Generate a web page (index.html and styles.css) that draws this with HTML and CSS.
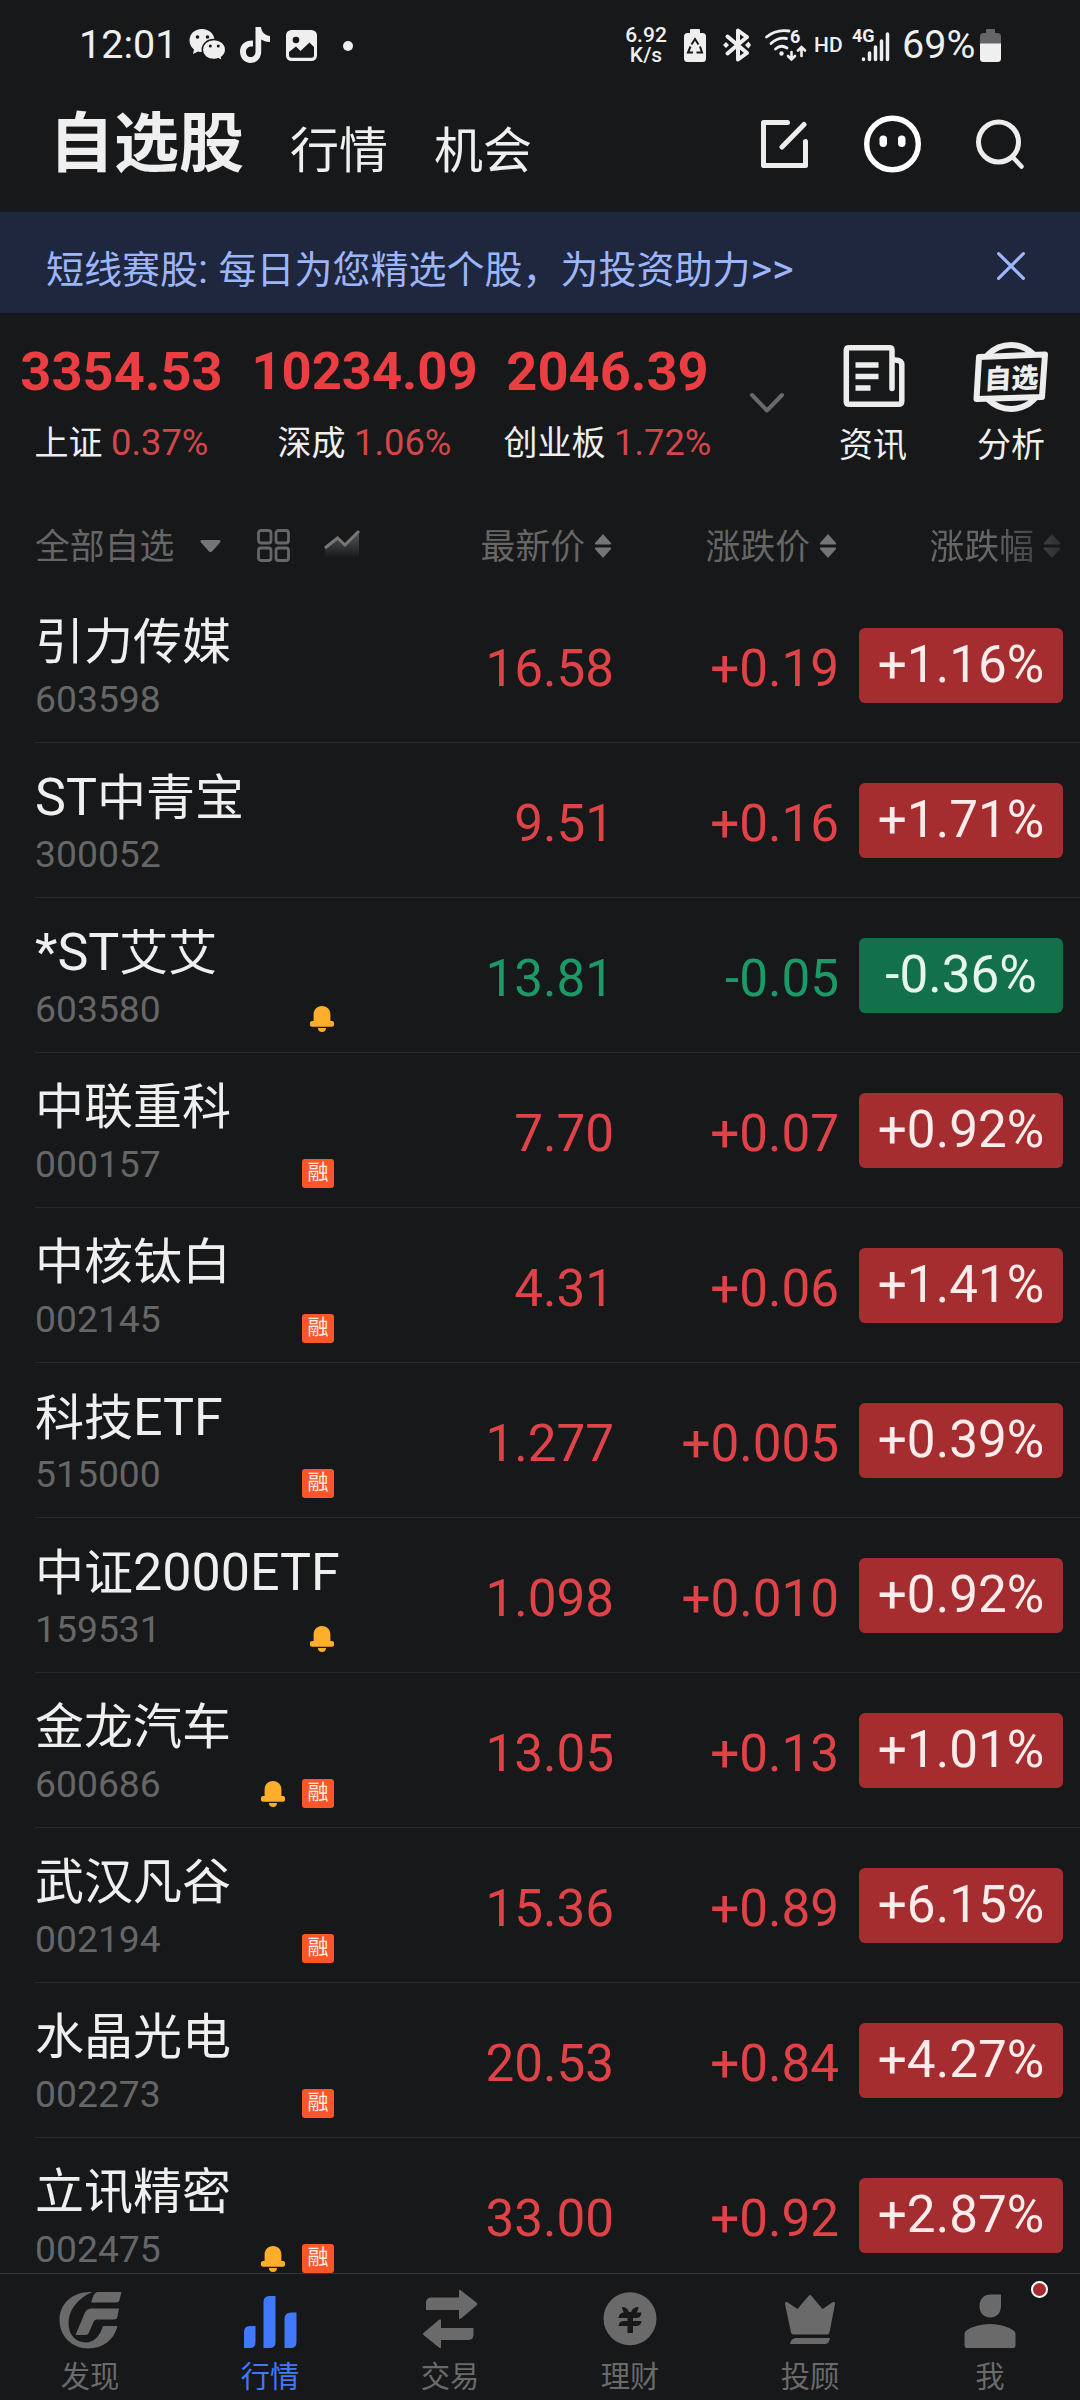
FILE: index.html
```html
<!DOCTYPE html>
<html lang="zh-CN">

<head>
    <meta charset="UTF-8">
    <meta name="viewport" content="width=device-width, initial-scale=1.0">
    <title>自选股</title>
    <link rel="stylesheet" href="styles.css">
</head>

<body>
    <!-- 公用图标 -->
    <svg class="sprite" width="0" height="0">
        <symbol id="bell" viewBox="0 0 24 26">
            <path d="M12 0C6.800 0 3.600 3.800 3.600 8.500V15H2.600A2.900 2.900 0 0 0 2.600 20.800H21.400A2.900 2.900 0 0 0 21.400 15H20.400V8.500C20.400 3.800 17.200 0 12 0Z" />
            <path d="M8 22H16C16 24.500 14.500 26 12 26S8 24.500 8 22Z" />
        </symbol>
        <symbol id="sort" viewBox="0 0 18 24">
            <path d="M9 0L17 9Q17.500 10.500 16.500 10.500H1.500Q.500 10.500 1 9Z" />
            <path d="M9 24L17 15Q17.500 13.500 16.500 13.500H1.500Q.500 13.500 1 15Z" />
        </symbol>
    </svg>

    <div class="app">
        <!-- 状态栏 -->
        <div class="status">
            <span class="time">12:01</span>
            <svg class="wechat" width="37" height="34" viewBox="0 0 37 34">
                <path fill="#efefef" d="M13 1C5.500 1 .500 6 .500 12.500C.500 16.500 2.500 19.500 5 21.500L4 26L9 23.500Q11 24 13 24C20 24 25.500 19 25.500 12.500S20 1 13 1Z" />
                <path fill="#efefef" stroke="#17181a" stroke-width="1.500" d="M25 11.500C18 11.500 13.300 16 13.300 21.700S18 31.500 25 31.500Q27.500 31.500 29.500 30.800L33.500 33L32.500 29.300C35 27.500 36.700 24.800 36.700 21.700C36.700 16 31.500 11.500 25 11.500Z" />
                <g fill="#17181a">
                    <circle cx="8.500" cy="9" r="1.800" />
                    <circle cx="18.500" cy="9" r="1.800" />
                    <circle cx="21.300" cy="18" r="1.500" />
                    <circle cx="29.300" cy="18" r="1.500" />
                </g>
            </svg>
            <svg class="tiktok" width="30" height="36" viewBox="0 0 30 36">
                <path fill="#efefef" d="M15.500 0H21C21.500 5 25 8.500 30 9V15Q25 15 21.200 12.500V24.500C21.200 31.500 16.500 36 10.500 36S0 31 0 24.500C0 17.500 5.500 13 13 13.500V19.500C9 19 6 21 6 24.700C6 28 8 30 10.700 30S15.500 28 15.500 24.500Z" />
            </svg>
            <svg class="photo" width="31" height="31" viewBox="0 0 31 31">
                <rect width="31" height="31" rx="5.500" fill="#efefef" />
                <circle cx="10" cy="10" r="3.300" fill="#17181a" />
                <path fill="#17181a" d="M3 22L10 16.500L14.500 21L23.500 12.500L28 17V25.500Q28 27.800 25.500 27.800H5.500Q3 27.800 3 25.500Z" />
            </svg>
            <i class="more"></i>
            <span class="speed">6.92<br>K/s</span>
            <svg class="eco" width="22" height="33" viewBox="0 0 22 33">
                <path fill="#efefef" d="M7 0H15Q16 0 16 1V4H18.500Q22 4 22 7.500V29.500Q22 33 18.500 33H3.500Q0 33 0 29.500V7.500Q0 4 3.500 4H6V1Q6 0 7 0Z" />
                <path fill="none" stroke="#17181a" stroke-width="2" d="M7.500 15.500L11 10L14.500 15.500M16 17.500L18 23.500H12.500M9 23.500H4L6.500 17.500" />
            </svg>
            <svg class="bt" width="28" height="34" viewBox="0 0 28 34">
                <path fill="none" stroke="#efefef" stroke-width="4" stroke-linejoin="round" stroke-linecap="round" d="M4.500 8.500L24 25L15 31.500V2.500L24 9L4.500 25.500" />
                <path fill="#efefef" d="M0 17L3 14L6 17L3 20ZM22 17L25.500 13.500L28 17L25.500 20.500Z" />
            </svg>
            <svg class="wifi" width="41" height="34" viewBox="0 0 41 34">
                <g fill="none" stroke="#efefef" stroke-width="2.800" stroke-linecap="round">
                    <path d="M1.500 9Q11 1 24 3M6 15.500Q13 9 21.500 10.500M10.500 21Q16 16 22 20" />
                    <path stroke-width="2.600" d="M26.500 24V31M23 28L26.500 31.500L30 28M36.500 28V20M33 22.500L36.500 19L40 22.500" />
                </g>
                <circle cx="16.500" cy="25.500" r="2.200" fill="#efefef" />
                <text x="25" y="15" class="tiny">6</text>
            </svg>
            <span class="hd">HD</span>
            <svg class="signal" width="37" height="34" viewBox="0 0 37 34">
                <text x="-1" y="13.500" class="tiny">4G</text>
                <path fill="none" stroke="#efefef" stroke-width="3.500" stroke-linecap="round" d="M10.500 31V31.500M16.500 25V31.500M22.500 19V31.500M28.500 13V31.500M34.500 6V31.500" />
            </svg>
            <span class="percent">69%</span>
            <svg class="battery" width="21" height="33" viewBox="0 0 21 33">
                <path fill="#666669" d="M7 0H14Q15 0 15 1V4H17.500Q21 4 21 7.500V15H0V7.500Q0 4 3.500 4H6V1Q6 0 7 0Z" />
                <path fill="#efefef" d="M0 14.500H21V29.500Q21 33 17.500 33H3.500Q0 33 0 29.500Z" />
            </svg>
        </div>

        <!-- 头部 -->
        <div class="header">
            <span class="current">自选股</span>
            <span class="tab">行情</span>
            <span class="tab">机会</span>
            <div class="tools">
                <svg width="47" height="48" viewBox="0 0 47 48">
                    <path fill="none" stroke="#ededed" stroke-width="5" stroke-linecap="round" stroke-linejoin="round" d="M26.500 2.500H2.500V45.500H44.500V21.500M43 4.500L21 27" />
                </svg>
                <svg width="57" height="58" viewBox="0 0 57 58">
                    <circle cx="28.500" cy="29" r="25.800" fill="none" stroke="#fff" stroke-width="5.400" />
                    <rect x="15.500" y="20.500" width="7.500" height="11.500" rx="3.700" fill="#fff" />
                    <rect x="34" y="20.500" width="7.500" height="11.500" rx="3.700" fill="#fff" />
                </svg>
                <svg width="48" height="50" viewBox="0 0 48 50">
                    <circle cx="22.500" cy="23" r="20" fill="none" stroke="#ededed" stroke-width="5" />
                    <path stroke="#ededed" stroke-width="4.500" stroke-linecap="round" d="M38 39.500L45.500 47.500" />
                </svg>
            </div>
        </div>

        <!-- 广告条 -->
        <div class="notice">
            <p>短线赛股<span>: </span>每日为您精选个股，为投资助力<span>&gt;&gt;</span></p>
            <svg width="28" height="28" viewBox="0 0 28 28">
                <path fill="none" stroke="#9db5fa" stroke-width="3.200" stroke-linecap="round" d="M1.600 1.600L26.400 26.400M26.400 1.600L1.600 26.400" />
            </svg>
        </div>

        <!-- 大盘指数 -->
        <div class="index">
            <div class="index-item">
                <b>3354.53</b>
                <p>上证 <span>0.37%</span></p>
            </div>
            <div class="index-item">
                <b class="long">10234.09</b>
                <p>深成 <span>1.06%</span></p>
            </div>
            <div class="index-item">
                <b>2046.39</b>
                <p>创业板 <span>1.72%</span></p>
            </div>
            <svg class="down" width="34" height="20" viewBox="0 0 34 20">
                <path fill="none" stroke="#6a6a6a" stroke-width="4" stroke-linecap="round" stroke-linejoin="round" d="M2 2L17 17.500L32 2" />
            </svg>
            <div class="entry">
                <svg width="76" height="72" viewBox="0 0 76 72">
                    <g fill="none" stroke="#ededed" stroke-linejoin="round" stroke-linecap="round" stroke-width="5.500">
                        <path d="M57 48.500V10Q57 7.800 54.500 7.800H14Q11.300 7.800 11.300 10.500V61.500Q11.300 64.300 14 64.300H63.500Q66.800 64.300 66.800 61V25Q66.800 20 60 20" />
                    </g>
                    <path stroke="#ededed" stroke-width="5.500" d="M20.500 25H43.500M20.500 36.500H43.500M20.500 48H35.500" />
                </svg>
                <p>资讯</p>
            </div>
            <div class="entry">
                <svg width="76" height="72" viewBox="0 0 76 72">
                    <circle cx="38" cy="37" r="32" fill="none" stroke="#ededed" stroke-width="6" />
                    <path fill="#17181a" stroke="#ededed" stroke-width="6" stroke-linejoin="round" d="M6 17L72 14.500L69 57L3.500 59Z" />
                    <text class="stamp" x="0" y="0" transform="translate(11 49) rotate(-2) skewX(-5)">自选</text>
                </svg>
                <p>分析</p>
            </div>
        </div>

        <!-- 表头 -->
        <div class="row thead">
            <div class="filter">
                <span>全部自选</span>
                <svg class="arrow" width="21" height="13" viewBox="0 0 21 13">
                    <path fill="#757575" d="M2 0H19Q21.500 0 20 2.500L12 11.500Q10.500 13 9 11.500L1 2.500Q-.500 0 2 0Z" />
                </svg>
                <svg class="grid" width="33" height="33" viewBox="0 0 33 33">
                    <g fill="none" stroke="#676767" stroke-width="2.800">
                        <rect x="1.500" y="1.500" width="12.500" height="12.500" rx="2.500" />
                        <rect x="19" y="1.500" width="12.500" height="12.500" rx="2.500" />
                        <rect x="1.500" y="19" width="12.500" height="12.500" rx="2.500" />
                        <rect x="19" y="19" width="12.500" height="12.500" rx="2.500" />
                    </g>
                </svg>
                <svg class="trend" width="34" height="30" viewBox="0 0 34 30">
                    <defs>
                        <linearGradient id="shade" x1="0" y1="0" x2="0" y2="1">
                            <stop offset="0" stop-color="#6a6a6a" stop-opacity=".8" />
                            <stop offset="1" stop-color="#6a6a6a" stop-opacity="0" />
                        </linearGradient>
                    </defs>
                    <path fill="url(#shade)" d="M0 18L12.500 8L20 15L34 1V28H0Z" />
                    <path fill="none" stroke="#777" stroke-width="3" d="M0 18L12.500 8L20 15L34 1" />
                </svg>
            </div>
            <div class="th">最新价<svg><use href="#sort" /></svg></div>
            <div class="th">涨跌价<svg><use href="#sort" /></svg></div>
            <div class="th last">涨跌幅<svg><use href="#sort" /></svg></div>
        </div>

        <!-- 股票列表 -->
        <div class="list">
            <div class="row">
                <div class="stock">
                    <p class="name">引力传媒</p>
                    <p class="code">603598</p>
                </div>
                <span class="num">16.58</span>
                <span class="num">+0.19</span>
                <span class="rate">+1.16%</span>
            </div>
            <div class="row">
                <div class="stock">
                    <p class="name"><span>ST</span>中青宝</p>
                    <p class="code">300052</p>
                </div>
                <span class="num">9.51</span>
                <span class="num">+0.16</span>
                <span class="rate">+1.71%</span>
            </div>
            <div class="row fall">
                <div class="stock">
                    <p class="name"><span>*ST</span>艾艾</p>
                    <p class="code">603580</p>
                    <div class="tags"><svg><use href="#bell" /></svg></div>
                </div>
                <span class="num">13.81</span>
                <span class="num">-0.05</span>
                <span class="rate">-0.36%</span>
            </div>
            <div class="row">
                <div class="stock">
                    <p class="name">中联重科</p>
                    <p class="code">000157</p>
                    <div class="tags"><i>融</i></div>
                </div>
                <span class="num">7.70</span>
                <span class="num">+0.07</span>
                <span class="rate">+0.92%</span>
            </div>
            <div class="row">
                <div class="stock">
                    <p class="name">中核钛白</p>
                    <p class="code">002145</p>
                    <div class="tags"><i>融</i></div>
                </div>
                <span class="num">4.31</span>
                <span class="num">+0.06</span>
                <span class="rate">+1.41%</span>
            </div>
            <div class="row">
                <div class="stock">
                    <p class="name">科技<span>ETF</span></p>
                    <p class="code">515000</p>
                    <div class="tags"><i>融</i></div>
                </div>
                <span class="num">1.277</span>
                <span class="num">+0.005</span>
                <span class="rate">+0.39%</span>
            </div>
            <div class="row">
                <div class="stock">
                    <p class="name">中证<span>2000ETF</span></p>
                    <p class="code">159531</p>
                    <div class="tags"><svg><use href="#bell" /></svg></div>
                </div>
                <span class="num">1.098</span>
                <span class="num">+0.010</span>
                <span class="rate">+0.92%</span>
            </div>
            <div class="row">
                <div class="stock">
                    <p class="name">金龙汽车</p>
                    <p class="code">600686</p>
                    <div class="tags"><svg><use href="#bell" /></svg><i>融</i></div>
                </div>
                <span class="num">13.05</span>
                <span class="num">+0.13</span>
                <span class="rate">+1.01%</span>
            </div>
            <div class="row">
                <div class="stock">
                    <p class="name">武汉凡谷</p>
                    <p class="code">002194</p>
                    <div class="tags"><i>融</i></div>
                </div>
                <span class="num">15.36</span>
                <span class="num">+0.89</span>
                <span class="rate">+6.15%</span>
            </div>
            <div class="row">
                <div class="stock">
                    <p class="name">水晶光电</p>
                    <p class="code">002273</p>
                    <div class="tags"><i>融</i></div>
                </div>
                <span class="num">20.53</span>
                <span class="num">+0.84</span>
                <span class="rate">+4.27%</span>
            </div>
            <div class="row">
                <div class="stock">
                    <p class="name">立讯精密</p>
                    <p class="code">002475</p>
                    <div class="tags"><svg><use href="#bell" /></svg><i>融</i></div>
                </div>
                <span class="num">33.00</span>
                <span class="num">+0.92</span>
                <span class="rate">+2.87%</span>
            </div>
        </div>

        <!-- 底部导航 -->
        <div class="nav">
            <div class="nav-item">
                <svg viewBox="0 0 64 60">
                    <path d="M34.500 2C14 1 1.500 14 1.500 30C1.500 46 14 58.500 30 58.500C45 58.500 56 50 59.500 36H45C42 46 36 52.500 28 52.500C17 52.500 10.500 44 10.500 33C10.500 20 20 8 34.500 2Z" />
                    <path d="M40 2H63.500L61.500 10Q61 12.500 58.500 12.500H33L35.500 5.500Q37 2 40 2ZM33.500 18.500H61L59.500 26.500Q59 29.500 56 29.500H38.500Q36.500 29.500 35.500 32L31 42.500Q30 45 27.500 45H17.500L27 22.500Q29 18.500 33.500 18.500Z" />
                </svg>
                <p>发现</p>
            </div>
            <div class="nav-item active">
                <svg viewBox="0 0 64 60">
                    <path d="M6 42Q6 36 12 36H17.500V52Q17.500 58 11.500 58H6ZM25.500 12Q25.500 6 31.500 6H37.500V52Q37.500 58 31.500 58H25.500ZM46.500 29Q46.500 22.500 53 22.500H58.500V52Q58.500 58 52.500 58H46.500Z" />
                </svg>
                <p>行情</p>
            </div>
            <div class="nav-item">
                <svg viewBox="0 0 64 60">
                    <path d="M8 20V13Q8 7.500 13.500 7.500H41V1Q41 -1 43 .500L59 13Q60 14 59 15L43 28.500Q41 29.500 41 28V20ZM55.500 38V44.500Q55.500 50 50 50H23V57Q23 59 21 57.500L5.500 45Q4.500 44 5.500 43L21 29.800Q23 28.500 23 30.500V38Z" />
                </svg>
                <p>交易</p>
            </div>
            <div class="nav-item">
                <svg viewBox="0 0 64 60">
                    <circle cx="32" cy="28.700" r="26.500" />
                    <path class="cut" d="M24 17Q29 17 31 22H33Q35 17 40.500 17Q40.500 20 38.500 22.500H43.500Q43 28 38 28H35V31H43.500Q43 36 38 36H35V43H29.500V36H20.500Q21 31 26 31H29.500V28H20.500Q21 22.500 26 22.500Q24 20 24 17Z" />
                </svg>
                <p>理财</p>
            </div>
            <div class="nav-item">
                <svg viewBox="0 0 64 60">
                    <path d="M7 14Q6.500 11.500 9 12L19.500 19L30.500 6Q32 4 33.500 6L44.500 19L55 12Q57.500 11.500 57 14L51.500 42.500Q51 44.500 49 44.500H15.500Q13.500 44.500 13 42.500ZM12 54Q13 48 18 48H52Q51 54 47 54Z" />
                </svg>
                <p>投顾</p>
            </div>
            <div class="nav-item">
                <svg viewBox="0 0 64 60">
                    <path d="M32.500 4.500H43V16C43 23 38.500 27.500 32 27.500S21.500 22.500 21.500 16C21.500 9 26 4.500 32.500 4.500ZM6.500 44Q6.500 41.500 8.500 40.500Q18 34 32 34T55.500 40.500Q57.500 41.500 57.500 44V55.500Q57.500 58 55 58H9Q6.500 58 6.500 55.500Z" />
                </svg>
                <p>我</p>
                <i class="dot"></i>
            </div>
        </div>
    </div>
</body>

</html>
```
FILE: styles.css
```css
* {
    margin: 0;
    padding: 0;
    box-sizing: border-box;
}

body {
    background: #17181a;
    color: #efefef;
    font-family: Roboto, "Noto Sans CJK SC", sans-serif;
}

i {
    font-style: normal;
}

svg {
    display: block;
    flex-shrink: 0;
    overflow: visible;
}

.sprite {
    position: absolute;
}

.app {
    width: 1080px;
    height: 2400px;
    display: flex;
    flex-direction: column;
    overflow: hidden;
}

/* 状态栏 */
.status {
    height: 90px;
    padding-left: 79px;
    display: flex;
    align-items: center;
}

.time,
.percent {
    font-size: 39.500px;
    line-height: 90px;
}

.time {
    width: 110px;
}

.tiktok {
    margin-left: 14px;
}

.photo {
    margin-left: 16px;
}

.more {
    width: 10px;
    height: 10px;
    margin: 2px 0 0 26px;
    border-radius: 50%;
    background: #efefef;
}

.speed {
    width: 48px;
    margin-left: 269px;
    font-size: 21px;
    line-height: 20px;
    text-align: center;
    font-weight: 500;
}

.eco {
    margin-left: 14px;
}

.bt {
    margin-left: 17px;
}

.wifi {
    margin-left: 14px;
}

.tiny {
    font-size: 18px;
    font-weight: 700;
    fill: #efefef;
}

.hd {
    width: 39px;
    margin-left: 8px;
    font-size: 21px;
    font-weight: 500;
}

.percent {
    width: 78px;
    margin-left: 12px;
}

/* 头部 */
.header {
    height: 122px;
    padding: 0 56px 0 49px;
    display: flex;
}

.header .current {
    width: 241px;
    font-size: 65px;
    line-height: 108px;
    font-weight: 700;
}

.header .tab {
    width: 144px;
    font-size: 49px;
    line-height: 123px;
}

.tools {
    height: 108px;
    margin-left: auto;
    display: flex;
    align-items: center;
    gap: 55.500px;
}

/* 广告条 */
.notice {
    height: 101px;
    padding: 0 55px 0 46px;
    display: flex;
    align-items: center;
    justify-content: space-between;
    background: #1e273d;
    color: #9db5fa;
}

.notice p {
    font-size: 38px;
    line-height: 101px;
    padding-top: 13px;
}

.notice p span {
    font-size: 41.500px;
}

.notice svg {
    margin-top: 6px;
}

/* 大盘指数 */
.index {
    height: 188px;
    display: grid;
    grid-template-columns: 243px 243px 243px 75px 138px 138px;
    text-align: center;
}

.index b {
    display: block;
    padding-top: 28px;
    font-size: 54.200px;
    line-height: 61px;
    color: #ea3e43;
}

.index b.long {
    font-size: 52.500px;
}

.index p {
    font-size: 34px;
    line-height: 50px;
    margin-top: 16px;
    white-space: nowrap;
}

.index p span {
    font-size: 36.300px;
    color: #d2474a;
}

.down {
    margin: 80px auto 0;
}

.entry svg {
    margin: 27px auto 0;
}

.entry .stamp {
    font-size: 27px;
    font-weight: 900;
    fill: #ededed;
}

.entry p {
    margin-top: 8px;
}

/* 列表 */
.row {
    height: 155px;
    margin-left: 35px;
    display: grid;
    grid-template-columns: 299px 280px 225px 224px;
    flex-shrink: 0;
    border-bottom: 1px solid #28292b;
    color: #e04347;
}

.row.thead {
    height: 87px;
    border: none;
    font-size: 34.800px;
    line-height: 90px;
    color: #666;
}

.filter {
    width: 340px;
    display: flex;
    align-items: center;
}

.filter .arrow {
    margin-left: 26px;
}

.filter .grid {
    margin: -2px 0 0 36px;
}

.filter .trend {
    margin: -4px 0 0 35px;
}

.th {
    padding: 1px 2px 0 0;
    display: flex;
    justify-content: flex-end;
    align-items: center;
}

.th svg {
    width: 18px;
    height: 24px;
    margin: -2px 0 0 9px;
    fill: #757575;
}

.th.last {
    -webkit-mask-image: linear-gradient(to right, #000 155px, rgba(0, 0, 0, .3) 215px);
    mask-image: linear-gradient(to right, #000 155px, rgba(0, 0, 0, .3) 215px);
}

.list {
    flex: 1;
    overflow: hidden;
}

.stock {
    position: relative;
}

.name {
    height: 91px;
    font-size: 49px;
    line-height: 110px;
    color: #efefef;
    white-space: nowrap;
}

.name span {
    font-size: 52px;
}

.code {
    font-size: 37.300px;
    line-height: 40px;
    color: #666;
}

.tags {
    position: absolute;
    right: 0;
    top: 106px;
    height: 29px;
    display: flex;
    align-items: center;
    gap: 17px;
}

.tags svg {
    width: 24px;
    height: 26px;
    fill: #ffae2c;
}

.tags i {
    width: 32px;
    height: 29px;
    border-radius: 3px;
    background: #fb5529;
    color: #ffece6;
    font-size: 21px;
    line-height: 27px;
    text-align: center;
}

.num {
    font-size: 51.200px;
    line-height: 162px;
    text-align: right;
}

.rate {
    width: 204px;
    height: 75px;
    margin: 40px 0 0 20px;
    border-radius: 6px;
    background: #a52d30;
    color: #fcebeb;
    font-size: 51.200px;
    line-height: 74px;
    text-align: center;
}

.fall {
    color: #1b9a67;
}

.fall .rate {
    background: #12714a;
    color: #e6f5ee;
}

/* 底部导航 */
.nav {
    height: 127px;
    border-top: 1px solid #363738;
    display: grid;
    grid-template-columns: repeat(6, 180px);
    background: #17181a;
    color: #6a6a6a;
}

.nav-item {
    position: relative;
    text-align: center;
    fill: #6a6a6a;
}

.nav-item svg {
    width: 64px;
    height: 60px;
    margin: 16px auto 0;
}

.nav-item p {
    font-size: 29.300px;
    line-height: 40px;
    margin-top: 7px;
}

.nav-item .cut {
    fill: #17181a;
}

.nav-item.active {
    color: #4179fc;
    fill: #4179fc;
}

.dot {
    position: absolute;
    top: 7px;
    right: 32px;
    width: 17px;
    height: 17px;
    border: 2px solid #fff;
    border-radius: 50%;
    background: #a52d30;
}
```
